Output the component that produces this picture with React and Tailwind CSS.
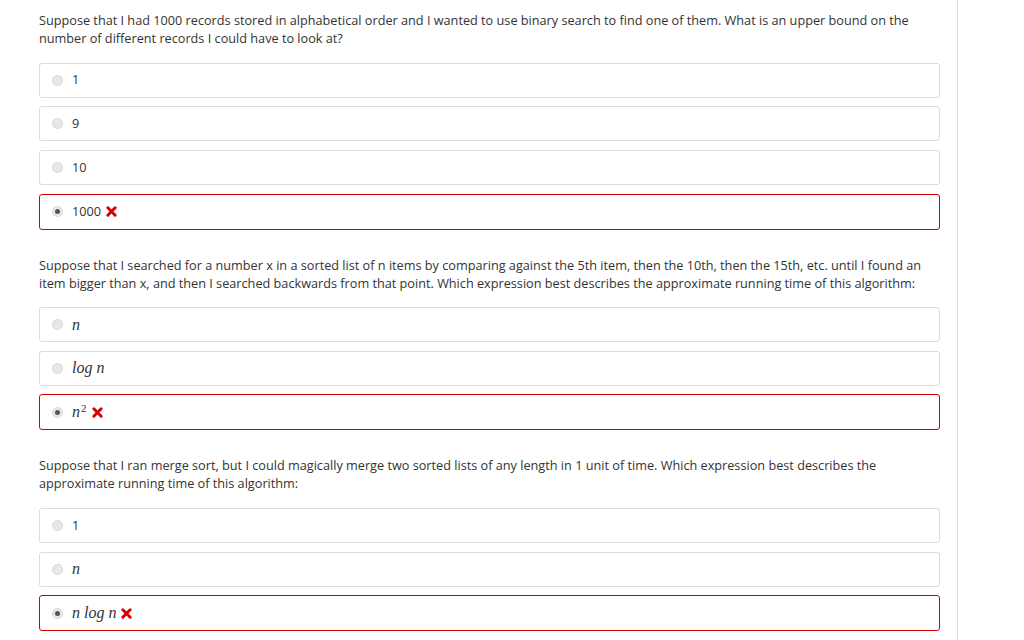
const questions = [
  {
    text: 'Suppose that I had 1000 records stored in alphabetical order and I wanted to use binary search to find one of them. What is an upper bound on the number of different records I could have to look at?',
    options: [
      { label: '1' },
      { label: '9' },
      { label: '10' },
      { label: '1000', selected: true },
    ],
  },
  {
    text: 'Suppose that I searched for a number x in a sorted list of n items by comparing against the 5th item, then the 10th, then the 15th, etc. until I found an item bigger than x, and then I searched backwards from that point. Which expression best describes the approximate running time of this algorithm:',
    options: [
      { math: 'n' },
      { math: 'log n' },
      { math: 'n', sup: '2', selected: true },
    ],
  },
  {
    text: 'Suppose that I ran merge sort, but I could magically merge two sorted lists of any length in 1 unit of time. Which expression best describes the approximate running time of this algorithm:',
    options: [
      { label: '1' },
      { math: 'n' },
      { math: 'n log n', selected: true },
    ],
  },
];

const Radio = ({ checked }) => (
  <span className="w-[11px] h-[11px] rounded-full bg-[#e8e8e8] border border-[#d6d6d6] flex items-center justify-center shrink-0">
    {checked && <span className="w-[5px] h-[5px] rounded-full bg-[#555]" />}
  </span>
);

const Cross = () => (
  <svg width="11" height="11" viewBox="0 0 12 12" className="ml-[5px]">
    <path d="M2 2 L10 10 M10 2 L2 10" stroke="#d40000" strokeWidth="3.2" strokeLinecap="round" />
  </svg>
);

const Option = ({ option }) => (
  <div
    className={`flex items-center pl-[12px] rounded-[3px] bg-white ${
      option.selected ? 'h-[36px] border-[1.5px] border-[#d40000]' : 'h-[35px] border border-[#dcdcdc]'
    }`}
  >
    <Radio checked={option.selected} />
    <div className="ml-[9px] flex items-center">
      {option.math ? (
        <span className="italic text-[16px] text-[#333] whitespace-pre" style={{ fontFamily: '"Liberation Serif", serif' }}>
          {option.math}
          {option.sup && <sup className="text-[11px] not-italic ml-[1px]">{option.sup}</sup>}
        </span>
      ) : (
        <span className="text-[12.7px] text-[#333]">{option.label}</span>
      )}
      {option.selected && <Cross />}
    </div>
  </div>
);

export default function App() {
  return (
    <div className="w-[1024px] h-[640px] bg-white overflow-hidden" style={{ fontFamily: '"Open Sans", sans-serif' }}>
      <div className="w-[958px] h-full border-r border-[#ddd] pl-[39px] pr-[17px] pt-[11px] flex flex-col gap-[26px]">
        {questions.map((q, i) => (
          <div key={i} className="flex flex-col">
            <p className="text-[12.7px] leading-[18px] text-[#333]">{q.text}</p>
            <div className="mt-[15.5px] flex flex-col gap-[8.7px]">
              {q.options.map((o, j) => (
                <Option key={j} option={o} />
              ))}
            </div>
          </div>
        ))}
      </div>
    </div>
  );
}
